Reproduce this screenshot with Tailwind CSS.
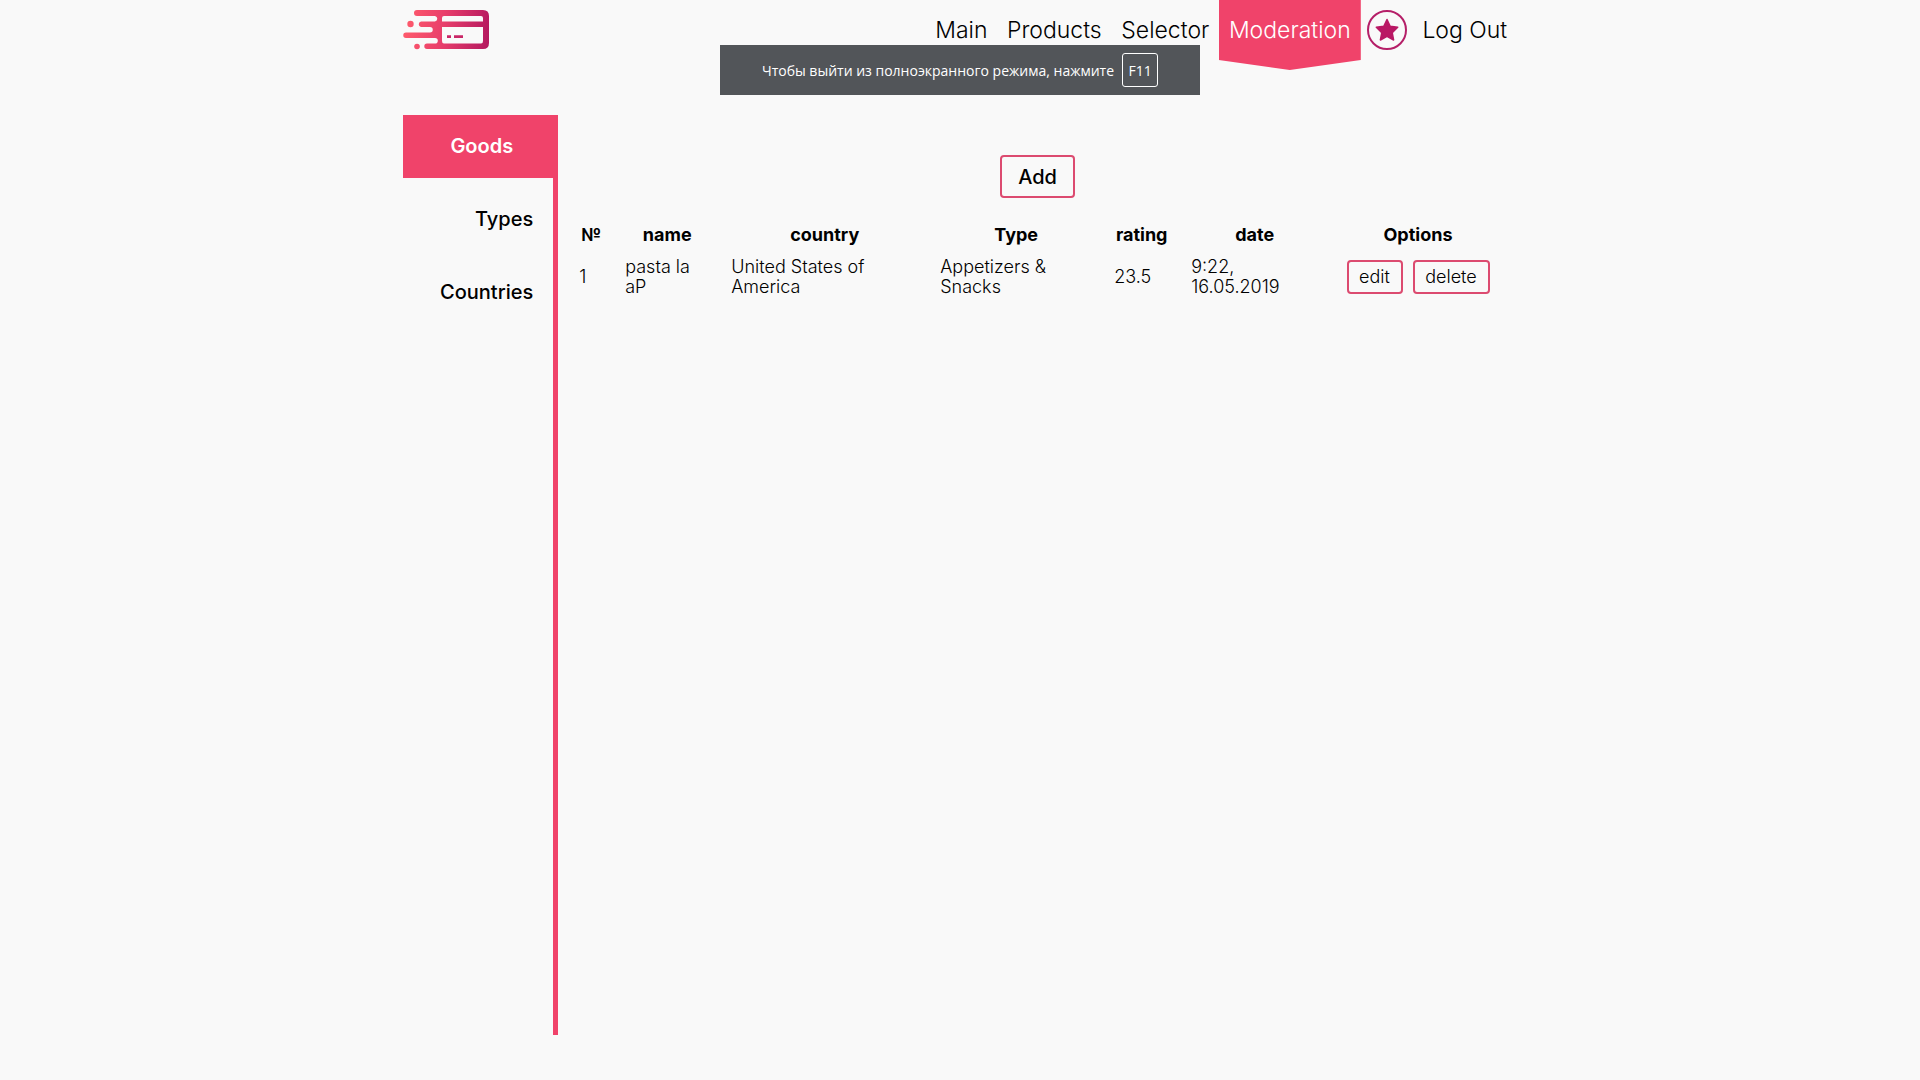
<!DOCTYPE html>
<html lang="en">
<head>
<meta charset="utf-8">
<title>Moderation</title>
<script src="https://cdn.jsdelivr.net/npm/@tailwindcss/browser@4"></script>
</head>
<body class="relative min-h-screen bg-[#f9f9f9] font-['Inter',sans-serif] text-black">
<div class="mx-auto w-[58%]">
  <header class="flex h-[60px] items-center justify-between">
    <a href="#" aria-label="Home">
      <svg class="h-10 w-[87px]" viewBox="0 0 87 40" fill="none" stroke-linecap="round">
        <defs><linearGradient id="brand" gradientUnits="userSpaceOnUse" x1="0" y1="14" x2="87" y2="26"><stop offset="0" stop-color="#ff5c6c"/><stop offset=".45" stop-color="#e93f6b"/><stop offset="1" stop-color="#b4185f"/></linearGradient></defs>
        <path fill="url(#brand)" fill-rule="evenodd" d="M14 0H80Q86 0 86 6V33Q86 39 80 39H24A2.7 2.7 0 0 1 24 33.600H32A2.500 2.500 0 0 0 32 28H3A2.700 2.700 0 0 1 3 22.500H27A2.700 2.700 0 0 0 27 17H18A2.800 2.800 0 0 1 18 11.500H32A2.800 2.800 0 0 0 32 6H14A3 3 0 0 1 14 0ZM41 6Q39 6 39 8V11.500H80V8Q80 6 78 6ZM39 17V31Q39 33.500 41 33.500H78Q80 33.500 80 31V17Z"/>
        <circle cx="7.500" cy="14" r="3.200" fill="url(#brand)"/><circle cx="14" cy="36.500" r="2.800" fill="url(#brand)"/>
        <path d="M44 25.300h4v2.600h-4zM51 25.300h9v2.600h-9z" fill="#c92767"/>
      </svg>
    </a>
    <nav class="flex h-full items-center text-[23px] font-light whitespace-nowrap">
      <a href="#" class="flex w-[71px] justify-center">Main</a>
      <a href="#" class="flex w-[115px] justify-center">Products</a>
      <a href="#" class="flex w-[107px] justify-center">Selector</a>
      <a href="#" class="flex h-[70px] w-[142px] justify-center self-start bg-[#f0436a] pt-[13px] text-white [clip-path:polygon(0_0,100%_0,100%_60px,50%_100%,0_60px)]">Moderation</a>
      <a href="#" aria-label="Favourites" class="flex w-[52px] justify-center">
        <svg class="size-10" viewBox="0 0 40 40"><circle cx="20" cy="20" r="19" fill="none" stroke="#b51f68" stroke-width="2"/><path d="M20 9.500L23.200 16.300L30.700 17.300L25.200 22.600L26.600 30L20 26.400L13.400 30L14.800 22.600L9.300 17.300L16.800 16.300Z" fill="#b91864" stroke="#b91864" stroke-width="1.500" stroke-linejoin="round"/></svg>
      </a>
      <a href="#" class="flex w-[104px] justify-center">Log Out</a>
    </nav>
  </header>

  <div class="mt-[55px] flex">
    <aside class="flex min-h-[920px] w-[155px] shrink-0 flex-col gap-[10px] border-r-[5px] border-[#f0436a] text-right text-[20px] leading-[63px] font-medium">
      <a href="#" class="-mr-[5px] bg-[#f0436a] pr-[45px] font-semibold text-white">Goods</a>
      <a href="#" class="pr-5">Types</a>
      <a href="#" class="pr-5">Countries</a>
    </aside>
    <main class="flex-1 px-[10px] pt-10">
      <button type="button" class="mx-auto block h-[43px] w-[75px] rounded-[4px] border-2 border-[#dc4b70] text-[20px] font-medium">Add</button>
      <table class="mt-[22px] w-full table-fixed text-left text-[18px] leading-5 font-light">
        <colgroup><col class="w-[46px]"><col class="w-[106px]"><col class="w-[209px]"><col class="w-[174px]"><col class="w-[77px]"><col class="w-[149px]"><col></colgroup>
        <thead>
          <tr class="h-[30px] text-center font-extrabold">
            <th scope="col" class="px-1">№</th><th scope="col">name</th><th scope="col">country</th><th scope="col">Type</th><th scope="col">rating</th><th scope="col">date</th><th scope="col">Options</th>
          </tr>
        </thead>
        <tbody>
          <tr class="h-[54px]">
            <td class="px-[11px]">1</td>
            <td class="px-[11px]">pasta la aP</td>
            <td class="px-[11px]">United States of America</td>
            <td class="px-[11px]">Appetizers &amp; Snacks</td>
            <td class="px-[11px]">23.5</td>
            <td class="px-[11px]">9:22, 16.05.2019</td>
            <td><div class="flex justify-center gap-[10px]">
              <button type="button" class="h-[34px] w-14 rounded-[4px] border-2 border-[#dc4b70]">edit</button>
              <button type="button" class="h-[34px] w-[77px] rounded-[4px] border-2 border-[#dc4b70]">delete</button>
            </div></td>
          </tr>
        </tbody>
      </table>
    </main>
  </div>
</div>

<div role="status" class="absolute top-[45px] left-1/2 flex h-[50px] w-[480px] -translate-x-1/2 items-center justify-center gap-2 bg-[#525559] font-['Open_Sans','Noto_Sans',sans-serif] text-[14px] whitespace-nowrap text-white">
  <span>Чтобы выйти из полноэкранного режима, нажмите</span>
  <kbd class="flex h-[34px] w-9 items-center justify-center rounded-[3px] border border-white font-[inherit]">F11</kbd>
</div>
</body>
</html>
